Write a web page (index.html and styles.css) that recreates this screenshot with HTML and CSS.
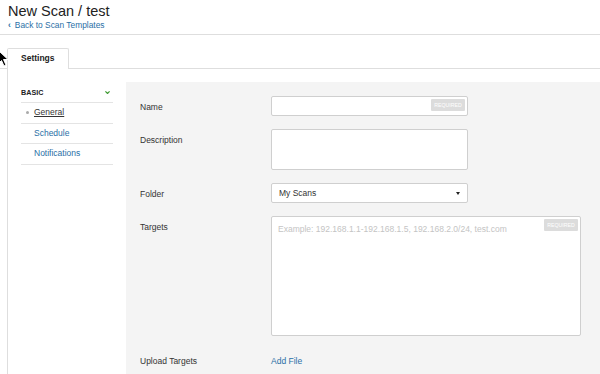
FILE: index.html
```html
<!DOCTYPE html>
<html lang="en">
<head>
  <meta charset="utf-8">
  <title>New Scan / test</title>
  <link rel="stylesheet" href="styles.css">
</head>
<body>
  <header class="header">
    <h1>New Scan / test</h1>
    <a class="back-link" href="#"><span class="back-arrow">&lsaquo;</span>Back to Scan Templates</a>
  </header>

  <div class="tabs">
    <div class="tab active">Settings</div>
  </div>

  <main class="content">
    <nav class="sidebar">
      <div class="side-head">
        <span>BASIC</span>
        <svg class="chevron" width="5" height="3" viewBox="0 0 5 3">
          <path d="M0.4 0.4 L2.5 2.5 L4.6 0.4" fill="none" stroke="#3f9b32" stroke-width="1.2"/>
        </svg>
      </div>
      <a class="side-item current" href="#"><span class="dot"></span>General</a>
      <a class="side-item" href="#">Schedule</a>
      <a class="side-item" href="#">Notifications</a>
    </nav>

    <section class="panel">
      <div class="form-row">
        <label>Name</label>
        <div class="field short">
          <div class="input"></div>
          <span class="required">REQUIRED</span>
        </div>
      </div>

      <div class="form-row">
        <label>Description</label>
        <div class="field short">
          <div class="input textarea"></div>
        </div>
      </div>

      <div class="form-row">
        <label>Folder</label>
        <div class="field short">
          <div class="input select">
            <span>My Scans</span>
            <span class="caret"></span>
          </div>
        </div>
      </div>

      <div class="form-row">
        <label>Targets</label>
        <div class="field wide">
          <div class="input targets">Example: 192.168.1.1-192.168.1.5, 192.168.2.0/24, test.com</div>
          <span class="required">REQUIRED</span>
        </div>
      </div>

      <div class="form-row upload">
        <label>Upload Targets</label>
        <div class="field">
          <a class="add-file" href="#">Add File</a>
        </div>
      </div>
    </section>
  </main>

  <svg class="cursor" width="12" height="18" viewBox="0 0 12 18">
    <path d="M1 1 L1 15 L4.5 11.5 L7 17 L9 16 L6.5 10.5 L11 10.5 Z" fill="#000" stroke="#fff" stroke-width="1"/>
  </svg>
</body>
</html>
```

FILE: styles.css
```css
body {
  font-family: 'Liberation Sans', Arial, sans-serif;
  font-size: 8.5px;
  color: #333;
  background: #fff;
  margin: 0;
  height: 374px;
  overflow: hidden;
  position: relative;
}

a {
  color: #2a6fa6;
  text-decoration: none;
}

.header {
  padding: 3px 8px 3px;
  border-bottom: 1px solid #dedede;
}

.header h1 {
  margin: 0;
  font-size: 14.5px;
  line-height: 17px;
  font-weight: normal;
  color: #222;
}

.back-link {
  display: block;
  line-height: 11px;
  font-size: 8.4px;
}

.back-arrow {
  font-weight: bold;
  margin-right: 4px;
}

.tabs {
  display: flex;
  margin-top: 13px;
  padding-left: 7px;
  border-bottom: 1px solid #dedede;
}

.tab {
  height: 19px;
  line-height: 19px;
  padding: 0 13px;
  font-weight: bold;
  color: #222;
  border: 1px solid #dedede;
  border-bottom: none;
  border-radius: 2px 2px 0 0;
  margin-bottom: -1px;
  background: #fff;
}

.tab.active {
  height: 20px;
}

.content {
  display: flex;
  gap: 13px;
  margin-left: 7px;
  border-left: 1px solid #dedede;
  padding: 13px 0 0 13px;
  height: 300px;
}

.sidebar {
  width: 92px;
  flex-shrink: 0;
}

.side-head {
  display: flex;
  align-items: center;
  justify-content: space-between;
  height: 20px;
  border-bottom: 1px solid #e4e4e4;
  font-size: 7.2px;
  font-weight: bold;
  color: #222;
  padding-right: 3px;
}

.chevron {
  display: block;
}

.side-item {
  display: block;
  height: 19.5px;
  line-height: 19.5px;
  padding-left: 13px;
  border-bottom: 1px solid #e4e4e4;
}

.side-item.current {
  color: #333;
  text-decoration: underline;
}

.dot {
  display: inline-block;
  width: 3px;
  height: 3px;
  border-radius: 50%;
  background: #aaa;
  margin-left: -8px;
  margin-right: 5px;
  vertical-align: middle;
}

.panel {
  flex: 1;
  background: #f4f4f4;
  padding: 14px 19px 20px 14px;
  display: flex;
  flex-direction: column;
  gap: 13px;
}

.form-row {
  display: grid;
  grid-template-columns: 131px 1fr;
  align-items: start;
}

.form-row label {
  display: block;
  height: 20px;
  line-height: 22px;
  color: #333;
}

.form-row.upload {
  margin-top: 1px;
}

.field {
  position: relative;
  line-height: 20px;
}

.field.short {
  width: 197px;
}

.field.wide {
  width: 310px;
}

.input {
  box-sizing: border-box;
  height: 20px;
  background: #fff;
  border: 1px solid #cfcfcf;
  border-radius: 2px;
}

.textarea {
  height: 41px;
}

.select {
  display: flex;
  align-items: center;
  justify-content: space-between;
  padding: 0 7px 0 7px;
  color: #333;
}

.caret {
  width: 0;
  height: 0;
  border-left: 2.5px solid transparent;
  border-right: 2.5px solid transparent;
  border-top: 3px solid #222;
}

.targets {
  height: 120px;
  padding: 7px 6px;
  line-height: 11px;
  color: #c4c4c4;
}

.required {
  position: absolute;
  top: 3px;
  right: 3px;
  width: 34px;
  height: 12px;
  line-height: 12px;
  text-align: center;
  background: #dcdcdc;
  color: #fff;
  border-radius: 1px;
  font-size: 5.2px;
}

.add-file {
  display: block;
  height: 20px;
  line-height: 22px;
}

.cursor {
  position: absolute;
  left: -3px;
  top: 49px;
}
```
